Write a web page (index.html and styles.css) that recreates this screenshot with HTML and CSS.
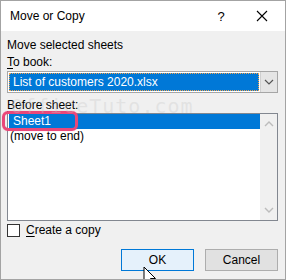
FILE: index.html
```html
<!doctype html>
<html>
<head>
<title>Move or Copy</title>
<link rel="stylesheet" href="styles.css">
</head>
<body>
<div class="dialog">
    <div class="title-bar">
        <span class="title">Move or Copy</span>
        <span class="help">?</span>
        <span class="close">
            <svg width="12" height="12" viewBox="0 0 12 12"><path d="M1 1 L11 11 M11 1 L1 11" stroke="#000" stroke-width="1.1" fill="none"/></svg>
        </span>
    </div>
    <div class="body">
        <div class="label">Move selected sheets</div>
        <div class="label"><u>T</u>o book:</div>
        <div class="combo">
            <div class="combo-field"><span>List of customers 2020.xlsx</span></div>
            <div class="combo-btn">
                <svg width="10" height="6" viewBox="0 0 10 6"><path d="M1 1 L5 5 L9 1" stroke="#555" stroke-width="1.2" fill="none"/></svg>
            </div>
        </div>
        <div class="label label-before"><u>B</u>efore sheet:</div>
        <div class="listbox">
            <div class="list-items">
                <div class="item selected">Sheet1</div>
                <div class="item">(move to end)</div>
            </div>
            <div class="scrollbar">
                <svg width="10" height="6" viewBox="0 0 10 6"><path d="M1 5 L5 1 L9 5" stroke="#bcbcbc" stroke-width="1.4" fill="none"/></svg>
                <svg width="10" height="6" viewBox="0 0 10 6"><path d="M1 1 L5 5 L9 1" stroke="#bcbcbc" stroke-width="1.4" fill="none"/></svg>
            </div>
            <div class="highlight"></div>
        </div>
        <div class="check-row">
            <span class="checkbox"></span>
            <span><u>C</u>reate a copy</span>
        </div>
        <div class="buttons">
            <div class="btn btn-default">OK</div>
            <div class="btn">Cancel</div>
        </div>
    </div>
    <div class="watermark">OfficeTuto.com</div>
    <svg class="cursor" width="14" height="22" viewBox="0 0 14 22">
        <path d="M1 1 L1 17 L5 13 L8 20 L10.5 19 L7.5 12.5 L12.5 12.5 Z" fill="#fff" stroke="#000" stroke-width="1" stroke-linejoin="round"/>
    </svg>
</div>
</body>
</html>
```

FILE: styles.css
```css
html, body {
    margin: 0;
    padding: 0;
}

body {
    font-family: "Liberation Sans", Arial, sans-serif;
    font-size: 12px;
    color: #000;
}

.dialog {
    position: relative;
    width: 284px;
    height: 278px;
    border: 1px solid #a3a3a3;
    background: #f0f0f0;
    overflow: hidden;
}

.title-bar {
    height: 30px;
    background: #fff;
    display: flex;
    align-items: center;
    padding-left: 9px;
}

.title {
    flex: 1;
}

.help {
    width: 20px;
    text-align: center;
    margin-right: 25px;
    font-size: 13px;
}

.close {
    width: 12px;
    margin-right: 17px;
    display: flex;
}

.body {
    padding: 6px 7px 0 6px;
}

.label {
    height: 17px;
    line-height: 17px;
}

u {
    text-decoration-thickness: 1px;
    text-underline-offset: 2px;
}

.combo {
    height: 20px;
    border: 1px solid #a6a6a6;
    display: flex;
    background: #fff;
}

.combo-field {
    flex: 1;
    padding: 1px;
    display: flex;
}

.combo-field span {
    flex: 1;
    background: #0078d7;
    color: #fff;
    outline: 1px dotted #f4a24a;
    outline-offset: -1px;
    padding-left: 4px;
    line-height: 18px;
}

.combo-btn {
    width: 16px;
    background: #e5e5e5;
    border-left: 1px solid #cfcfcf;
    display: flex;
    align-items: center;
    justify-content: center;
}

.label-before {
    margin-top: 4px;
    height: 16px;
}

.listbox {
    position: relative;
    height: 106px;
    border: 1px solid #828790;
    background: #fff;
    display: flex;
}

.list-items {
    flex: 1;
}

.item {
    height: 15px;
    line-height: 15px;
    padding-left: 2px;
}

.item.selected {
    background: #0078d7;
    color: #fff;
    margin-left: 1px;
    padding-left: 4px;
}

.scrollbar {
    width: 17px;
    background: #f0f0f0;
    display: flex;
    flex-direction: column;
    justify-content: space-between;
    align-items: center;
    padding: 7px 0 7px;
}

.highlight {
    position: absolute;
    left: -6px;
    top: -3px;
    width: 70px;
    height: 14px;
    border: 3px solid #ea4779;
    border-radius: 6px;
    box-shadow: 0 0 1px rgba(234, 71, 121, 0.6);
}

.check-row {
    display: flex;
    align-items: center;
    margin-top: 2px;
    height: 14px;
    gap: 6px;
}

.checkbox {
    width: 11px;
    height: 11px;
    border: 1px solid #333;
    background: #fff;
}

.buttons {
    display: flex;
    justify-content: flex-end;
    gap: 11px;
    margin-top: 12px;
}

.btn {
    width: 71px;
    height: 20px;
    line-height: 20px;
    text-align: center;
    border: 1px solid #adadad;
    background: #e1e1e1;
}

.btn-default {
    border-color: #0078d7;
    background: #e5f1fb;
}

.watermark {
    position: absolute;
    left: 10px;
    top: 93px;
    font-family: "DejaVu Sans Mono", monospace;
    font-size: 20px;
    letter-spacing: 1px;
    color: rgba(200, 200, 200, 0.35);
    pointer-events: none;
}

.cursor {
    position: absolute;
    left: 142px;
    top: 265px;
}
```
